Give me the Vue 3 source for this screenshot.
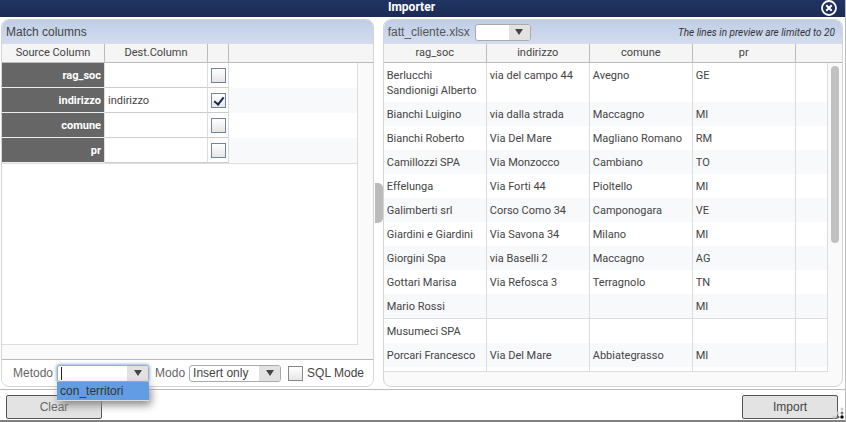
<template>
  <div class="dialog">
    <!-- Title bar -->
    <header class="titlebar">
      <h1>Importer</h1>
      <button class="close" aria-label="Close">
        <svg viewBox="0 0 16 16" width="16" height="16">
          <circle cx="8" cy="8" r="7" fill="none" stroke="#fff" stroke-width="1.8" />
          <path d="M5.3 5.3l5.4 5.4M10.7 5.3l-5.4 5.4" stroke="#fff" stroke-width="2" />
        </svg>
      </button>
    </header>

    <main class="content">
      <!-- Match columns -->
      <section class="panel match">
        <div class="panel-head">
          <h2>Match columns</h2>
        </div>
        <div class="grid-head match-cols">
          <span>Source Column</span>
          <span>Dest.Column</span>
          <span></span>
          <span></span>
        </div>
        <div class="grid-area">
          <div class="grid-body">
            <table class="match-table" aria-label="Match columns">
              <colgroup>
                <col class="w-source" />
                <col class="w-dest" />
                <col class="w-check" />
                <col />
              </colgroup>
              <tbody>
                <tr v-for="col in columns" :key="col.source">
                  <th scope="row">{{ col.source }}</th>
                  <td>{{ col.dest }}</td>
                  <td class="check-cell">
                    <input type="checkbox" v-model="col.selected" :aria-label="col.source" />
                  </td>
                  <td></td>
                </tr>
              </tbody>
            </table>
          </div>
        </div>

        <!-- Import options -->
        <form class="options" @submit.prevent>
          <label for="metodo">Metodo</label>
          <div class="combo" :class="{ typing: open }">
            <input id="metodo" type="text" v-model="method" autocomplete="off" />
            <button type="button" class="arrow" aria-label="Show methods" @click="open = !open">
              <svg viewBox="0 0 8 6" width="8" height="6"><path d="M0 0h8L4 6z" fill="#444" /></svg>
            </button>
            <ul v-if="open" class="menu">
              <li v-for="m in methods" :key="m" @click="pickMethod(m)">{{ m }}</li>
            </ul>
          </div>
          <label for="modo">Modo</label>
          <div class="select modo">
            <select id="modo" v-model="mode">
              <option>Insert only</option>
              <option>Update only</option>
            </select>
            <span class="arrow">
              <svg viewBox="0 0 8 6" width="8" height="6"><path d="M0 0h8L4 6z" fill="#444" /></svg>
            </span>
          </div>
          <input id="sql" class="sql" type="checkbox" v-model="sqlMode" />
          <label for="sql" class="dark">SQL Mode</label>
        </form>
      </section>

      <div class="splitter"><span></span></div>

      <!-- Preview -->
      <section class="panel preview">
        <div class="panel-head">
          <label for="sheet">fatt_cliente.xlsx</label>
          <div class="select sheet">
            <select id="sheet" v-model="sheet">
              <option value=""></option>
            </select>
            <span class="arrow">
              <svg viewBox="0 0 8 6" width="8" height="6"><path d="M0 0h8L4 6z" fill="#444" /></svg>
            </span>
          </div>
          <em>The lines in preview are limited to 20</em>
        </div>
        <div class="grid-head preview-cols">
          <span v-for="h in headers" :key="h">{{ h }}</span>
          <span></span>
        </div>
        <div class="grid-area">
          <div class="grid-body">
            <table class="preview-table" aria-label="Preview">
              <colgroup>
                <col v-for="h in headers" :key="h" class="w-data" />
                <col />
              </colgroup>
              <tbody>
                <tr v-for="row in rows" :key="row[0]" :class="{ ruled: row[0] === 'Musumeci SPA' }">
                  <td v-for="(cell, i) in row" :key="i">{{ cell }}</td>
                  <td></td>
                </tr>
                <tr class="filler">
                  <td v-for="n in 5" :key="n"></td>
                </tr>
              </tbody>
            </table>
          </div>
          <div class="scrollbar"><span></span></div>
        </div>
      </section>
    </main>

    <footer class="actions">
      <button>Clear</button>
      <button>Import</button>
      <svg class="grip" viewBox="0 0 12 12" width="12" height="12">
        <circle cx="10" cy="2" r="1.5" fill="#ccc" />
        <circle cx="6" cy="6" r="1.5" fill="#ccc" />
        <circle cx="10" cy="6" r="1.5" fill="#777" />
        <circle cx="2" cy="10" r="1.5" fill="#ccc" />
        <circle cx="6" cy="10" r="1.5" fill="#666" />
        <circle cx="10" cy="10" r="1.7" fill="#000" />
      </svg>
    </footer>
  </div>
</template>

<script setup>
import { ref } from "vue";

// Column matching
const columns = ref([
  { source: "rag_soc", dest: "", selected: false },
  { source: "indirizzo", dest: "indirizzo", selected: true },
  { source: "comune", dest: "", selected: false },
  { source: "pr", dest: "", selected: false },
]);

// Options
const method = ref("");
const methods = ["con_territori"];
const open = ref(true);
const mode = ref("Insert only");
const sqlMode = ref(false);
const sheet = ref("");

const pickMethod = (m) => {
  method.value = m;
  open.value = false;
};

// Preview data
const headers = ["rag_soc", "indirizzo", "comune", "pr"];
const rows = [
  ["Berlucchi Sandionigi Alberto", "via del campo 44", "Avegno", "GE"],
  ["Bianchi Luigino", "via dalla strada", "Maccagno", "MI"],
  ["Bianchi Roberto", "Via Del Mare", "Magliano Romano", "RM"],
  ["Camillozzi SPA", "Via Monzocco", "Cambiano", "TO"],
  ["Effelunga", "Via Forti 44", "Pioltello", "MI"],
  ["Galimberti srl", "Corso Como 34", "Camponogara", "VE"],
  ["Giardini e Giardini", "Via Savona 34", "Milano", "MI"],
  ["Giorgini Spa", "via Baselli 2", "Maccagno", "AG"],
  ["Gottari Marisa", "Via Refosca 3", "Terragnolo", "TN"],
  ["Mario Rossi", "", "", "MI"],
  ["Musumeci SPA", "", "", ""],
  ["Porcari Francesco", "Via Del Mare", "Abbiategrasso", "MI"],
];
</script>

<style>
body {
  margin: 0;
  background: #fff;
}
</style>

<style scoped>
* {
  box-sizing: border-box;
}

.dialog {
  display: flex;
  flex-direction: column;
  height: 100vh;
  border-right: 1px solid #bbb;
  border-bottom: 2px solid #808080;
  font-family: "Liberation Sans", Arial, sans-serif;
  font-size: 12px;
  color: #444;
}

.titlebar {
  display: flex;
  flex: none;
  align-items: flex-start;
  height: 17px;
  padding: 0 8px 0 2px;
  background: linear-gradient(#213463, #1b2b55);
}

.titlebar h1 {
  flex: 1;
  margin: 0;
  font-family: Roboto, sans-serif;
  font-size: 12px;
  line-height: 14px;
  text-align: center;
  color: #fff;
}

.close {
  display: flex;
  padding: 0;
  border: 0;
  background: none;
}

.content {
  display: flex;
  flex: 1;
  min-height: 0;
  padding: 2px 2px 2px 1px;
}

.panel {
  display: flex;
  flex-direction: column;
  min-width: 0;
  border: 1px solid #d5d5d5;
  border-radius: 8px;
  background: #fafafa;
}

.match {
  flex: 373;
}

.preview {
  flex: 461;
  overflow: hidden;
}

.panel-head {
  display: flex;
  flex: none;
  align-items: center;
  height: 24px;
  padding: 0 7px 0 4px;
  border-radius: 7px 7px 0 0;
  background: linear-gradient(#c0cde6, #d3ddee);
}

.panel-head h2 {
  margin: 0;
  font-size: 12px;
  font-weight: normal;
}

.panel-head label {
  color: #555;
}

.panel-head em {
  margin-left: auto;
  font-family: Roboto, sans-serif;
  font-size: 10px;
  color: #333;
}

/* Grids */
.grid-head {
  display: grid;
  flex: none;
  height: 19px;
  border-bottom: 1px solid #bbb;
  background: #f5f5f5;
  font-family: Roboto, sans-serif;
  font-size: 11px;
  line-height: 17px;
  text-align: center;
}

.grid-head span {
  border-right: 1px solid #bbb;
}

.grid-head span:last-child {
  border-right: 0;
}

.match-cols {
  grid-template-columns: 103px 103px 21px 1fr;
}

.preview-cols {
  grid-template-columns: repeat(4, 103px) 1fr;
}

.grid-area {
  display: flex;
  flex: 1;
  min-height: 0;
  padding: 0 15px 14px 0;
}

.preview .grid-area {
  padding-right: 0;
}

.grid-body {
  flex: 1;
  overflow: hidden;
  border: solid #ddd;
  border-width: 0 1px 1px 0;
  background: #fff;
}

table {
  width: 100%;
  border-collapse: separate;
  border-spacing: 0;
  table-layout: fixed;
  font-family: Roboto, sans-serif;
  font-size: 11px;
  line-height: 15px;
}

td,
th {
  height: 24px;
  padding: 5px 3px 4px;
  border-right: 1px solid #ddd;
  text-align: left;
  vertical-align: top;
}

td:last-child {
  border-right: 0;
}

tr:nth-child(even) td {
  background: #f8f9fb;
}

.w-source,
.w-dest,
.w-data {
  width: 103px;
}

.w-check {
  width: 21px;
}

.match-table {
  border-bottom: 1px solid #ddd;
}

.match-table th {
  height: 25px;
  border-bottom: 1px solid #eee;
  background: #666;
  color: #fff;
  text-align: right;
}

.match-table td {
  border-bottom: 1px solid #ccc;
}

.match-table tr td:not(:last-child) {
  background: #fff;
}

.match-table td:last-child {
  border-bottom: 0;
}

.match-table .check-cell {
  padding: 5px 2px 4px 3px;
}

.preview-table tr:first-child td {
  height: 39px;
}

.preview-table .ruled td {
  height: 25px;
  border-top: 1px solid #ddd;
  background: #fff;
}

.preview-table .filler td {
  height: 4px;
  padding: 0;
  background: #fff;
}

/* Form controls */
input[type="checkbox"] {
  appearance: none;
  display: block;
  width: 15px;
  height: 15px;
  margin: 0;
  border: 1px solid #72839f;
  background: linear-gradient(#fff, #e6e6e6);
}

input[type="checkbox"]:checked::after {
  content: "";
  display: block;
  width: 4px;
  height: 8px;
  margin: 1px 0 0 4px;
  border: solid #17264d;
  border-width: 0 2px 2px 0;
  transform: rotate(38deg);
}

input[type="checkbox"].sql {
  margin: 0 4px 0 7px;
  border-color: #888;
}

.options {
  display: flex;
  flex: none;
  align-items: center;
  height: 27px;
  padding-left: 11px;
  border-top: 1px solid #bbb;
  border-radius: 0 0 7px 7px;
  background: #fff;
}

.options label {
  margin-right: 4px;
  color: #666;
}

.options label.dark {
  color: #444;
}

.combo,
.select {
  position: relative;
  display: flex;
  height: 17px;
  border: 1px solid #aaa;
  border-radius: 3px;
  background: #fff;
}

.combo {
  width: 92px;
  margin-right: 6px;
  box-shadow: 0 0 3px 1px #8fb8ea;
}

.combo input {
  flex: 1;
  min-width: 0;
  padding: 0 3px;
  border: 0;
  outline: 0;
  background: none;
  font: inherit;
}

.combo.typing::before {
  content: "";
  position: absolute;
  top: 1px;
  left: 3px;
  width: 1px;
  height: 13px;
  background: #222;
}

.arrow {
  display: flex;
  flex: none;
  align-items: center;
  justify-content: center;
  width: 21px;
  padding: 0;
  border: 0;
  border-radius: 0 2px 2px 0;
  background: #e2e2e2;
}

.menu {
  position: absolute;
  z-index: 2;
  top: 16px;
  left: -1px;
  right: -1px;
  margin: 0;
  padding: 0;
  border-bottom: 1px solid #ddd;
  background: #629de4;
  box-shadow: 2px 4px 8px #888;
  list-style: none;
}

.menu li {
  padding: 0 3px;
  line-height: 18px;
  color: #333;
}

.select select {
  appearance: none;
  flex: 1;
  min-width: 0;
  padding: 0 3px;
  border: 0;
  background: none;
  font: inherit;
  color: inherit;
}

.modo {
  width: 92px;
}

.sheet {
  width: 56px;
  margin-left: 5px;
}

/* Splitter and scrollbar */
.splitter {
  display: flex;
  flex: none;
  align-items: center;
  justify-content: flex-end;
  width: 9px;
}

.splitter span {
  width: 8px;
  height: 40px;
  border-radius: 0 5px 5px 0;
  background: #bbb;
}

.scrollbar {
  width: 14px;
  padding: 3px 3px 0;
}

.scrollbar span {
  display: block;
  height: 58%;
  border-radius: 4px;
  background: #c1c1c1;
}

.actions {
  position: relative;
  display: flex;
  flex: none;
  justify-content: space-between;
  align-items: flex-start;
  height: 31px;
  padding: 5px 7px 0 6px;
  border-top: 1px solid #bbb;
}

.actions button {
  width: 96px;
  height: 24px;
  border: 1px solid #555;
  border-radius: 2px;
  background: #e3e3e3;
  font: inherit;
  color: #444;
}

.actions button:first-child {
  color: #666;
}

.grip {
  position: absolute;
  right: 1px;
  bottom: 1px;
}
</style>
